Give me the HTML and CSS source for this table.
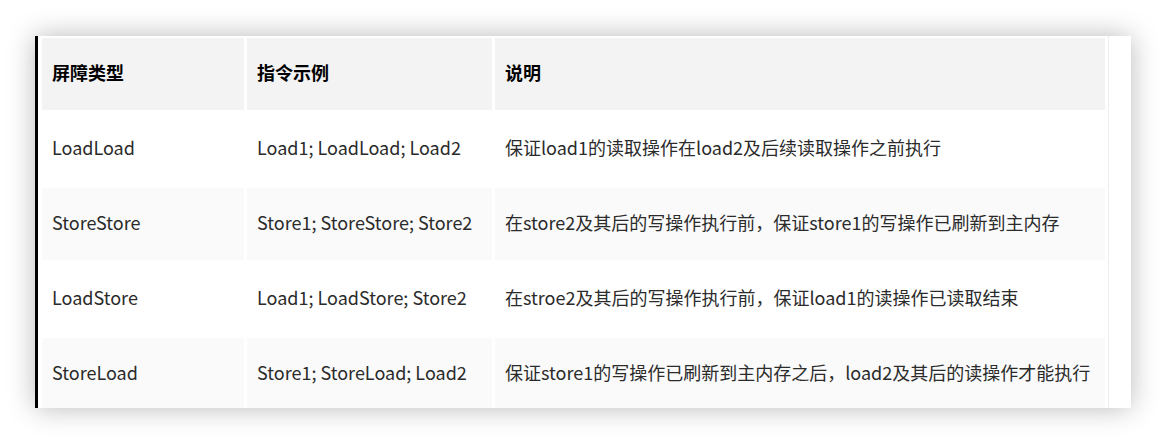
FILE: index.html
```html
<!DOCTYPE html>
<html>
<head>
  <meta charset="utf-8">
  <title>内存屏障</title>
  <link rel="stylesheet" href="styles.css">
</head>
<body>
  <div class="page">
    <div class="card">
      <table class="barrier-table">
        <colgroup>
          <col class="col-type">
          <col class="col-example">
          <col class="col-desc">
        </colgroup>
        <thead>
          <tr>
            <th>屏障类型</th>
            <th>指令示例</th>
            <th>说明</th>
          </tr>
        </thead>
        <tbody>
          <tr>
            <td>LoadLoad</td>
            <td>Load1; LoadLoad; Load2</td>
            <td>保证load1的读取操作在load2及后续读取操作之前执行</td>
          </tr>
          <tr>
            <td>StoreStore</td>
            <td>Store1; StoreStore; Store2</td>
            <td>在store2及其后的写操作执行前，保证store1的写操作已刷新到主内存</td>
          </tr>
          <tr>
            <td>LoadStore</td>
            <td>Load1; LoadStore; Store2</td>
            <td>在stroe2及其后的写操作执行前，保证load1的读操作已读取结束</td>
          </tr>
          <tr>
            <td>StoreLoad</td>
            <td>Store1; StoreLoad; Load2</td>
            <td>保证store1的写操作已刷新到主内存之后，load2及其后的读操作才能执行</td>
          </tr>
        </tbody>
      </table>
    </div>
  </div>
</body>
</html>
```

FILE: styles.css
```css
body {
  margin: 0;
  background: #fff;
  font-family: "Noto Sans CJK SC", "Noto Sans", sans-serif;
  color: #2b2b2b;
}
.page {
  padding: 36px 36px 36px 35px;
}
.card {
  width: 1092px;
  height: 372px;
  overflow: hidden;
  background: #fff;
  border-left: 3px solid #000;
  padding-left: 1px;
  box-shadow: 0 0 26px rgba(0,0,0,0.28);
}
.barrier-table {
  table-layout: fixed;
  width: 1069px;
  margin-top: -1px;
  border-collapse: separate;
  border-spacing: 3px;
  border-right: 1px solid #eee;
  font-size: 18px;
}
.col-type {
  width: 202px;
}
.col-example {
  width: 245px;
}
.col-desc {
  width: 610px;
}
th, td {
  height: 72px;
  padding: 0 10px 4px 10px;
  text-align: left;
  vertical-align: middle;
  white-space: nowrap;
  box-sizing: border-box;
}
th {
  background: #f3f3f3;
  color: #000;
  font-weight: bold;
}
tbody tr:nth-child(even) td {
  background: #fafafa;
}
```
